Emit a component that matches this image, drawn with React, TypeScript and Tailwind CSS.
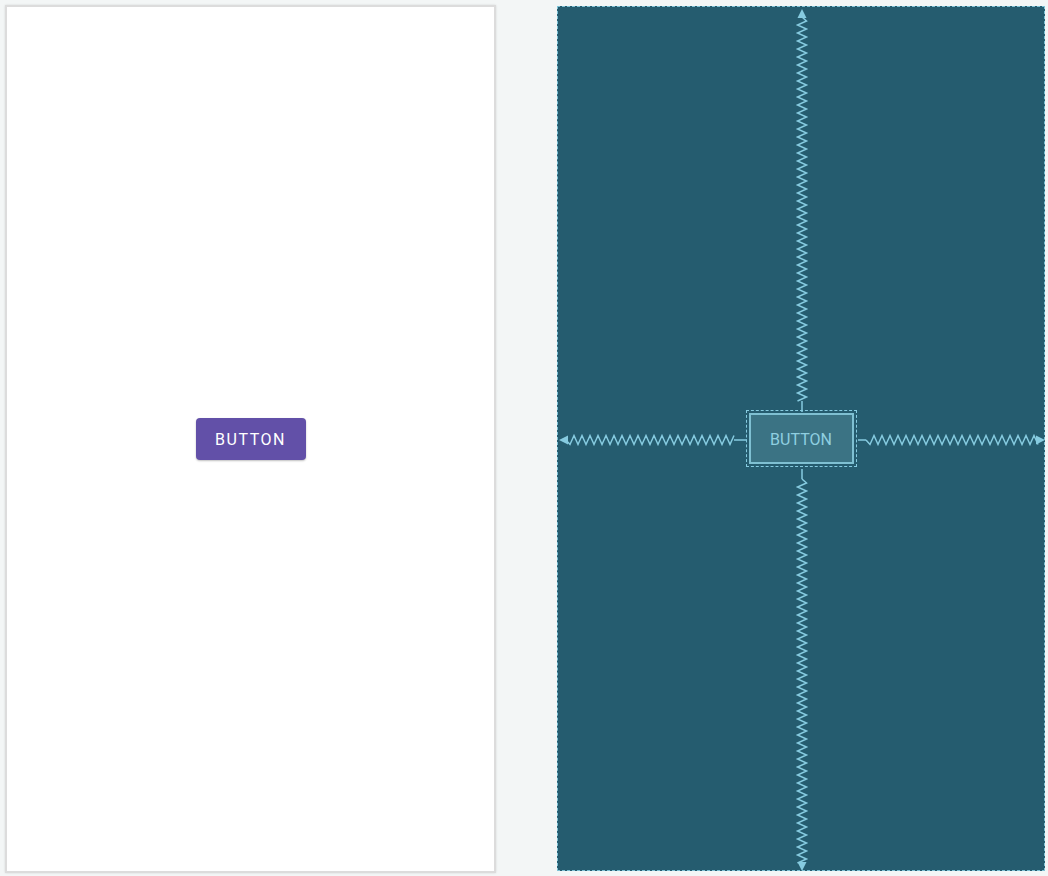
import React from 'react';

const LINE = '#86cbe0';

function zigzag(axis: 'x' | 'y', from: number, to: number, at: number, amp = 4.5, step = 4) {
  const pts: string[] = [];
  const dir = to > from ? 1 : -1;
  let i = 0;
  for (let p = from; dir > 0 ? p <= to : p >= to; p += dir * step, i++) {
    const off = i === 0 ? 0 : i % 2 === 1 ? amp : -amp;
    pts.push(axis === 'y' ? `${at + off},${p}` : `${p},${at + off}`);
  }
  return 'M' + pts.join(' L');
}

function Blueprint() {
  // panel is 488 x 865, center (244, 433)
  const cx = 244;
  const cy = 433;
  return (
    <svg className="absolute inset-0 pointer-events-none" width="488" height="865" viewBox="0 0 488 865">
      <g stroke={LINE} strokeWidth="1.5" fill="none">
        {/* top */}
        <path d={zigzag('y', 10, 394, cx)} />
        <line x1={cx} y1={394} x2={cx} y2={405} />
        {/* bottom */}
        <line x1={cx} y1={462} x2={cx} y2={472} />
        <path d={zigzag('y', 472, 856, cx)} />
        {/* left */}
        <path d={zigzag('x', 8, 176, cy)} />
        <line x1={176} y1={cy} x2={189} y2={cy} />
        {/* right */}
        <line x1={300} y1={cy} x2={308} y2={cy} />
        <path d={zigzag('x', 308, 480, cy)} />
      </g>
      <g fill={LINE}>
        <polygon points={`${cx - 4.5},11 ${cx + 4.5},11 ${cx},2`} />
        <polygon points={`${cx - 4.5},855 ${cx + 4.5},855 ${cx},864`} />
        <polygon points={`10,${cy - 4.5} 10,${cy + 4.5} 1,${cy}`} />
        <polygon points={`478,${cy - 4.5} 478,${cy + 4.5} 487,${cy}`} />
      </g>
    </svg>
  );
}

export default function App() {
  return (
    <div
      className="w-[1048px] h-[876px] bg-[#f3f6f6] flex items-start overflow-hidden"
      style={{ fontFamily: 'Roboto, "Liberation Sans", sans-serif' }}
    >
      {/* Design surface */}
      <div className="ml-[5px] mt-[5px] w-[491px] h-[868px] bg-white border-2 border-[#dcdcdc] shadow-[0_0_2px_rgba(0,0,0,0.12)] flex items-center justify-center">
        <button className="w-[110px] h-[42px] pt-[2px] bg-[#6250a8] rounded-[4px] text-white text-[16px] font-normal tracking-[1.5px] shadow-[0_1px_2px_rgba(0,0,0,0.25)]">
          BUTTON
        </button>
      </div>

      {/* Blueprint surface */}
      <div className="relative ml-[61px] mt-[6px] w-[488px] h-[865px] bg-[#255c6f] border border-dashed border-[#7fc3d6] flex items-center justify-center">
        <Blueprint />
        <div className="relative w-[111px] h-[57px] border border-dashed border-[#86cbe0] p-[2px]">
          <div className="w-full h-full pt-[3px] border-2 border-[#7fc0d2] bg-[#3b7384] flex items-center justify-center">
            <span className="text-[16px] text-[#8fcfe0]">BUTTON</span>
          </div>
        </div>
      </div>
    </div>
  );
}
